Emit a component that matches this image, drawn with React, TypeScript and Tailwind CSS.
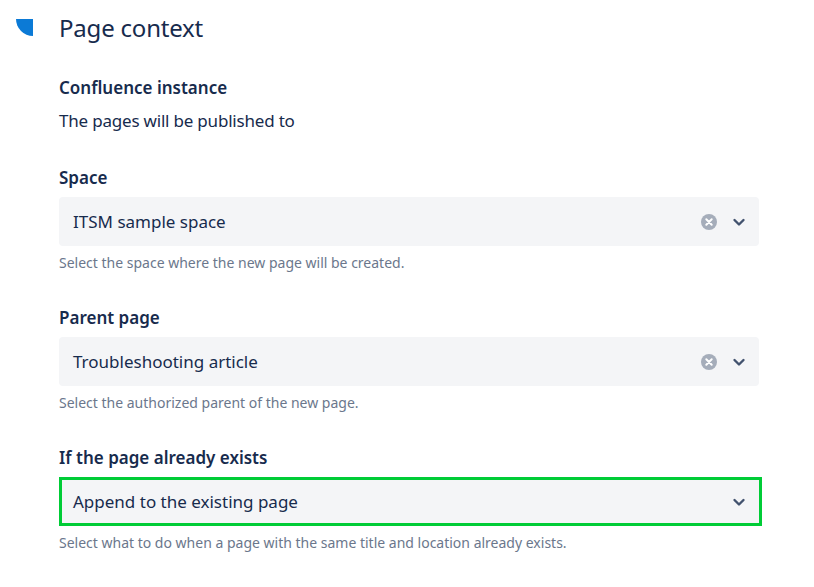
function Chevron() {
    return (
        <svg width="16" height="16" viewBox="0 0 16 16" fill="none">
            <path d="M3.5 6l4.5 4.5L12.5 6" stroke="#42526e" strokeWidth="2.4" strokeLinecap="round" strokeLinejoin="round" />
        </svg>
    );
}

function ClearIcon() {
    return (
        <svg width="16" height="16" viewBox="0 0 16 16">
            <circle cx="8" cy="8" r="8" fill="#a5adba" />
            <path d="M5.3 5.3l5.4 5.4M10.7 5.3l-5.4 5.4" stroke="#ffffff" strokeWidth="2" strokeLinecap="round" />
        </svg>
    );
}

function Select({ value, clearable, focused }: { value: string; clearable?: boolean; focused?: boolean }) {
    return (
        <div
            className={
                focused
                    ? "h-[49px] w-[703px] flex items-center bg-[#f4f5f7] border-[3px] border-[#00cc36] pl-[11px] pr-[12px]"
                    : "h-[49px] w-[700px] flex items-center bg-[#f4f5f7] rounded-[4px] pl-[14px] pr-[12px]"
            }
        >
            <span className="flex-1 text-[17px] text-[#172b4d]">{value}</span>
            {clearable && (
                <span className="mr-[14px] flex">
                    <ClearIcon />
                </span>
            )}
            <Chevron />
        </div>
    );
}

function Field({ label, value, help, clearable, focused }: { label: string; value: string; help: string; clearable?: boolean; focused?: boolean }) {
    return (
        <div className="flex flex-col">
            <div className="text-[17px] font-semibold text-[#172b4d] leading-[24px] mb-[7px]">{label}</div>
            <Select value={value} clearable={clearable} focused={focused} />
            <div className="text-[14px] text-[#6b778c] leading-[20px] mt-[7px]">{help}</div>
        </div>
    );
}

export default function App() {
    return (
        <div className="w-[814px] h-[587px] bg-white font-['Noto_Sans',sans-serif] relative">
            <div className="flex pt-[13px]">
                <div className="w-[59px] pl-[16px] pt-[6px]">
                    <div className="w-[17px] h-[17px] bg-[#0b7ad6] rounded-bl-[17px]"></div>
                </div>
                <div className="flex flex-col">
                    <h1 className="text-[24px] leading-[30px] text-[#172b4d] font-normal tracking-[-0.2px]">Page context</h1>
                    <div className="mt-[33px] text-[17px] font-semibold text-[#172b4d] leading-[24px]">Confluence instance</div>
                    <div className="mt-[9px] text-[17px] text-[#172b4d] leading-[24px] tracking-[-0.2px]">The pages will be published to</div>
                    <div className="mt-[33px] flex flex-col gap-[33px]">
                        <Field label="Space" value="ITSM sample space" help="Select the space where the new page will be created." clearable />
                        <Field label="Parent page" value="Troubleshooting article" help="Select the authorized parent of the new page." clearable />
                        <Field label="If the page already exists" value="Append to the existing page" help="Select what to do when a page with the same title and location already exists." focused />
                    </div>
                </div>
            </div>
        </div>
    );
}
